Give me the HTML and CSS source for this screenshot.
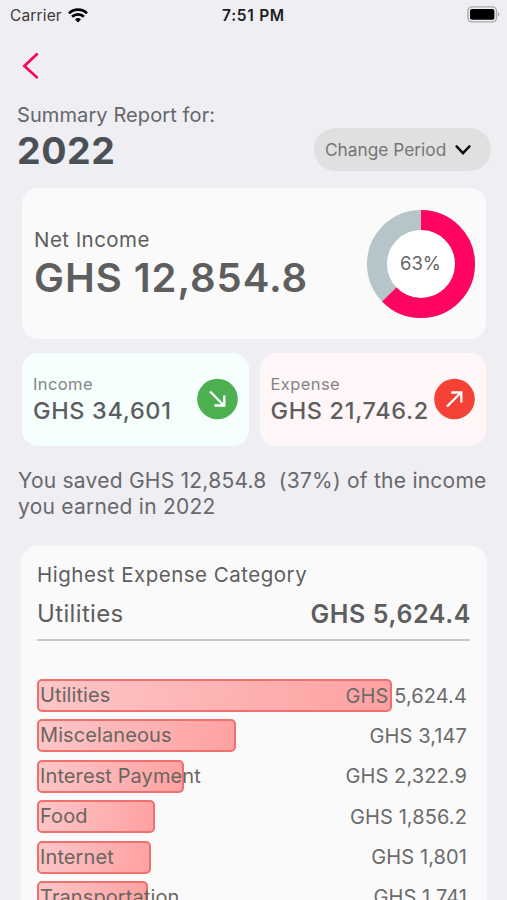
FILE: index.html
```html
<!DOCTYPE html>
<html lang="en">
<head>
    <meta charset="UTF-8">
    <meta name="viewport" content="width=device-width, initial-scale=1.0">
    <title>Summary Report</title>
    <link rel="stylesheet" href="styles.css">
</head>
<body>
    <div class="status-bar">
        <div class="carrier">
            <span>Carrier</span>
            <svg width="20" height="15" viewBox="0 0 20 15" fill="none" stroke="#000" stroke-width="2.7">
                <path d="M1 5.4a12.8 12.8 0 0 1 18 0"/>
                <path d="M4.1 8.7a8.4 8.4 0 0 1 11.8 0"/>
                <path d="M10 14.5l-3-3a4.3 4.3 0 0 1 6 0z" fill="#000" stroke="none"/>
            </svg>
        </div>
        <span class="time">7:51 PM</span>
        <svg class="battery" width="33" height="17" viewBox="0 0 33 17">
            <rect x=".9" y=".9" width="28.6" height="15" rx="4.2" fill="none" stroke="#a9a9ac" stroke-width="1.4"/>
            <rect x="3" y="3" width="24.4" height="10.8" rx="2" fill="#000"/>
            <path d="M31 6.2c1.8.6 1.8 3.8 0 4.4z" fill="#a9a9ac"/>
        </svg>
    </div>

    <div class="back">
        <svg width="18" height="28" viewBox="0 0 18 28" fill="none" stroke="#f8075f" stroke-width="2.8" stroke-linecap="round">
            <path d="M15.8 2.2L3.4 14L15.8 25.2"/>
        </svg>
    </div>

    <div class="header">
        <div>
            <p class="subtitle">Summary Report for:</p>
            <h1>2022</h1>
        </div>
        <button class="period">
            <span>Change Period</span>
            <svg width="16" height="11" viewBox="0 0 16 11" fill="none" stroke="#111" stroke-width="2.5" stroke-linecap="round">
                <path d="M1.6 2.3L8 9.1L14.4 2.3"/>
            </svg>
        </button>
    </div>

    <div class="card net">
        <div>
            <p class="net-label">Net Income</p>
            <p class="net-amount">GHS 12,854.8</p>
        </div>
        <svg class="donut" width="110" height="110" viewBox="0 0 110 110">
            <circle cx="55" cy="55" r="34" fill="#fff"/>
            <circle cx="55" cy="55" r="44" fill="none" stroke="#b6c5c9" stroke-width="20"/>
            <circle cx="55" cy="55" r="44" fill="none" stroke="#ff0460" stroke-width="20" pathLength="100" stroke-dasharray="62.8 100" transform="rotate(-90 55 55)"/>
            <text x="54.5" y="61" text-anchor="middle">63%</text>
        </svg>
    </div>

    <div class="totals">
        <div class="card total income">
            <div>
                <p class="total-label">Income</p>
                <p class="total-amount">GHS 34,601</p>
            </div>
            <svg width="42" height="42" viewBox="0 0 42 42" fill="none" stroke="#fff" stroke-width="2.3">
                <circle cx="20.5" cy="21" r="20.3" fill="#4caf50" stroke="none"/>
                <path d="M13 13.5L26.7 27.2M17.5 27.5H27.3V17.6"/>
            </svg>
        </div>
        <div class="card total expense">
            <div>
                <p class="total-label">Expense</p>
                <p class="total-amount">GHS 21,746.2</p>
            </div>
            <svg width="42" height="42" viewBox="0 0 42 42" fill="none" stroke="#fff" stroke-width="2.3">
                <circle cx="20.5" cy="21" r="20.3" fill="#f44336" stroke="none"/>
                <path d="M13 28.5L26.7 14.8M17.3 14.5H27.3V24.4"/>
            </svg>
        </div>
    </div>

    <p class="saved">You saved GHS 12,854.8 &nbsp;(37%) of the income<br>you earned in 2022</p>

    <div class="card categories">
        <p class="categories-title">Highest Expense Category</p>
        <div class="highest">
            <span>Utilities</span>
            <strong>GHS 5,624.4</strong>
        </div>
        <ul class="bars">
            <li>
                <div class="bar" style="width: 82.5%">Utilities</div>
                <span>GHS 5,624.4</span>
            </li>
            <li>
                <div class="bar" style="width: 46.2%">Miscelaneous</div>
                <span>GHS 3,147</span>
            </li>
            <li>
                <div class="bar" style="width: 34.2%">Interest Payment</div>
                <span>GHS 2,322.9</span>
            </li>
            <li>
                <div class="bar" style="width: 27.4%">Food</div>
                <span>GHS 1,856.2</span>
            </li>
            <li>
                <div class="bar" style="width: 26.6%">Internet</div>
                <span>GHS 1,801</span>
            </li>
            <li>
                <div class="bar" style="width: 25.7%">Transportation</div>
                <span>GHS 1,741</span>
            </li>
        </ul>
    </div>
</body>
</html>
```

FILE: styles.css
```css
* {
    box-sizing: border-box;
}

body {
    font-family: Inter, "Liberation Sans", sans-serif;
    background-color: #efeef3;
    color: #5e5e5e;
    height: 900px;
    margin: 0;
    overflow: hidden;
}

h1, p, ul {
    margin: 0;
    padding: 0;
}

svg {
    display: block;
    flex-shrink: 0;
}

.status-bar {
    display: grid;
    grid-template-columns: 1fr auto 1fr;
    align-items: center;
    height: 30px;
    padding: 0 7px 0 10px;
    font-size: 15.5px;
    color: #3a3a3c;
}

.carrier {
    display: flex;
    align-items: center;
    gap: 6px;
    letter-spacing: 0.15px;
}

.time {
    margin-left: -3px;
    font-weight: 600;
    letter-spacing: 0.7px;
    color: #1c1c1e;
}

.battery {
    justify-self: end;
    margin-bottom: 1px;
}

.back {
    padding: 22px 0 0 21px;
    height: 72px;
}

.header {
    display: flex;
    justify-content: space-between;
    padding: 0 16px 0 17px;
    height: 86px;
}

.subtitle {
    font-size: 20px;
    line-height: 27px;
    letter-spacing: 0.1px;
    color: #63666b;
}

h1 {
    font-size: 37.5px;
    line-height: 44px;
    font-weight: 700;
    letter-spacing: 0.6px;
    color: #4b5056;
}

.period {
    display: flex;
    align-items: center;
    gap: 9px;
    width: 177px;
    height: 43px;
    margin-top: 26px;
    padding: 0 0 0 11px;
    border: none;
    border-radius: 22px;
    background-color: #e0e0e0;
    color: #757575;
    font-family: inherit;
    font-size: 17.3px;
}

.card {
    border-radius: 16px;
    background-color: #fafafa;
}

.net {
    display: flex;
    justify-content: space-between;
    height: 151px;
    margin: 0 21px 0 22px;
    padding: 21px 10px 0 12px;
}

.net-label {
    margin-top: 17px;
    font-size: 20.5px;
    line-height: 28px;
    letter-spacing: 0.45px;
}

.net-amount {
    font-size: 40px;
    line-height: 48px;
    font-weight: 600;
    letter-spacing: 0.95px;
}

.donut text {
    font-size: 18.5px;
    fill: #666;
}

.totals {
    display: flex;
    gap: 11px;
    margin: 14px 21px 0 22px;
}

.total {
    display: flex;
    justify-content: space-between;
    flex: 1;
    min-width: 0;
    height: 93px;
    padding: 20px 10px 0 11px;
}

.total > div {
    width: 0;
}

.total svg {
    margin-top: 5px;
}

.income {
    background-color: #f5fffe;
}

.expense {
    background-color: #fff6f8;
}

.total-label {
    font-size: 16.5px;
    line-height: 23px;
    letter-spacing: 0.4px;
    color: #858585;
}

.total-amount {
    font-size: 23.5px;
    line-height: 29px;
    font-weight: 500;
    letter-spacing: 0.65px;
    white-space: nowrap;
}

.saved {
    margin: 22px 0 0 18px;
    font-size: 21px;
    line-height: 26px;
    letter-spacing: 0.24px;
    color: #68686b;
    white-space: nowrap;
}

.categories {
    height: 500px;
    margin: 26px 20px 0 21px;
    padding: 15px 17px 0 16px;
}

.categories-title {
    font-size: 20.5px;
    line-height: 28px;
    letter-spacing: 0.5px;
}

.highest {
    display: flex;
    justify-content: space-between;
    height: 52px;
    border-bottom: 2px solid #c6c8c8;
    font-size: 24px;
    line-height: 50px;
    letter-spacing: 0.35px;
}

.highest strong {
    margin-right: -1px;
    font-size: 25px;
    font-weight: 600;
    letter-spacing: 0.6px;
}

.bars {
    display: grid;
    gap: 7.4px;
    margin-top: 38px;
    list-style: none;
    font-size: 20px;
    letter-spacing: 0.1px;
    color: #6b6560;
}

.bars li {
    display: flex;
    align-items: center;
    justify-content: space-between;
    height: 33px;
    padding-right: 3px;
    white-space: nowrap;
}

.bars span {
    position: relative;
    margin-left: -60px;
    letter-spacing: 0.1px;
    color: #6b6b6b;
}

.bar {
    height: 33px;
    flex-shrink: 0;
    padding-left: 1px;
    border: 2px solid #f0706f;
    border-radius: 5px;
    background: linear-gradient(100deg, #fcc6c8, #ffa1a1);
    line-height: 29px;
}
```
